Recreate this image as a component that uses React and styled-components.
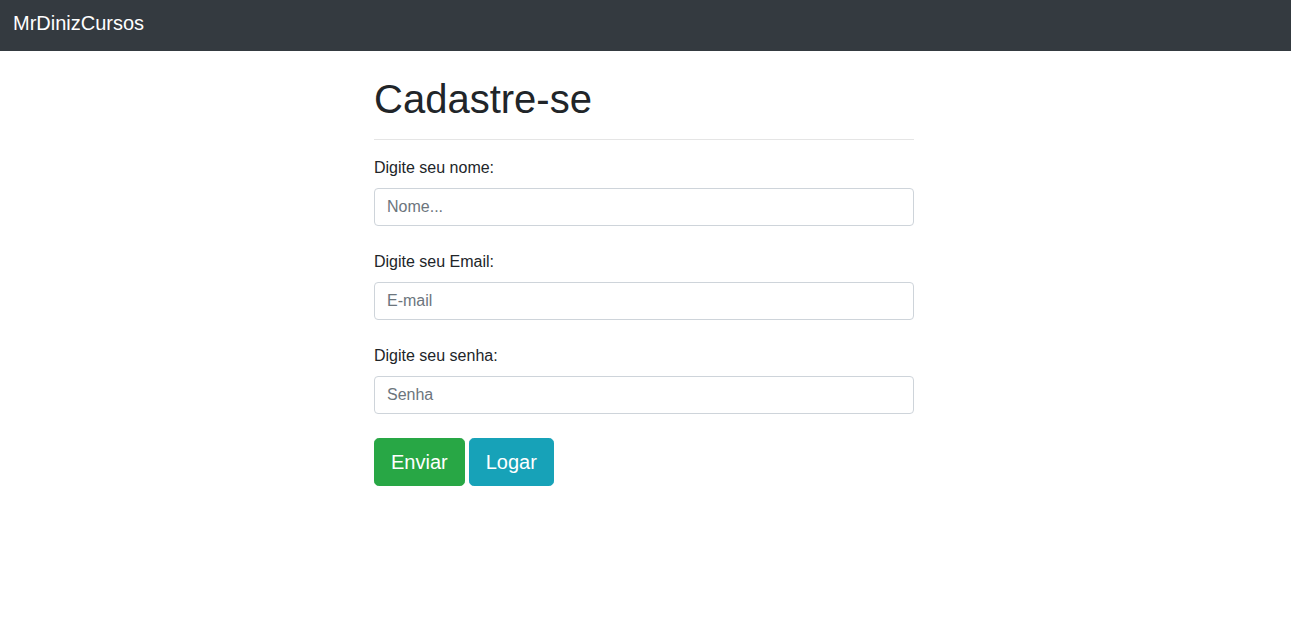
import styled, { createGlobalStyle } from "styled-components";

const GlobalStyle = createGlobalStyle`
  * {
    box-sizing: border-box;
  }
  body {
    margin: 0;
    background: #fff;
    color: #212529;
    font-family: "Liberation Sans", Arial, sans-serif;
    font-size: 16px;
    line-height: 1.5;
  }
`;

const Navbar = styled.nav`
  height: 51px;
  background: #343a40;
  padding: 8px 13px 0;
  display: flex;
  align-items: flex-start;
`;

const Brand = styled.a`
  color: #fff;
  font-size: 20px;
  line-height: 30px;
  text-decoration: none;
  cursor: pointer;
`;

const Main = styled.main`
  display: flex;
  justify-content: center;
  padding-right: 3px;
`;

const FormColumn = styled.form`
  width: 540px;
  padding-top: 24px;
`;

const Title = styled.h1`
  margin: 0;
  font-size: 40px;
  font-weight: 500;
  line-height: 48px;
`;

const Divider = styled.hr`
  margin: 16px 0;
  border: 0;
  border-top: 1px solid rgba(0, 0, 0, 0.1);
`;

const Group = styled.div`
  margin-bottom: 24px;
  display: flex;
  flex-direction: column;
`;

const Label = styled.label`
  margin-bottom: 8px;
  line-height: 24px;
`;

const Input = styled.input`
  height: 38px;
  padding: 6px 12px;
  font-family: inherit;
  font-size: 16px;
  line-height: 24px;
  color: #495057;
  border: 1px solid #ced4da;
  border-radius: 4px;
  outline: none;

  &::placeholder {
    color: #6c757d;
    opacity: 1;
  }
`;

const Actions = styled.div`
  display: flex;
  gap: 4px;
`;

const Button = styled.button`
  padding: 8px 16px;
  font-family: inherit;
  font-size: 20px;
  line-height: 30px;
  color: #fff;
  background: ${(props) => (props.variant === "info" ? "#17a2b8" : "#28a745")};
  border: 1px solid
    ${(props) => (props.variant === "info" ? "#17a2b8" : "#28a745")};
  border-radius: 4.8px;
  cursor: pointer;
`;

const fields = [
  { id: "nome", label: "Digite seu nome:", placeholder: "Nome...", type: "text" },
  { id: "email", label: "Digite seu Email:", placeholder: "E-mail", type: "email" },
  { id: "senha", label: "Digite seu senha:", placeholder: "Senha", type: "password" },
];

const App = () => {
  return (
    <>
      <GlobalStyle />
      <Navbar>
        <Brand>MrDinizCursos</Brand>
      </Navbar>
      <Main>
        <FormColumn onSubmit={(e) => e.preventDefault()}>
          <Title>Cadastre-se</Title>
          <Divider />
          {fields.map((field) => (
            <Group key={field.id}>
              <Label htmlFor={field.id}>{field.label}</Label>
              <Input id={field.id} type={field.type} placeholder={field.placeholder} />
            </Group>
          ))}
          <Actions>
            <Button type="submit">Enviar</Button>
            <Button type="button" variant="info">
              Logar
            </Button>
          </Actions>
        </FormColumn>
      </Main>
    </>
  );
};

export default App;
